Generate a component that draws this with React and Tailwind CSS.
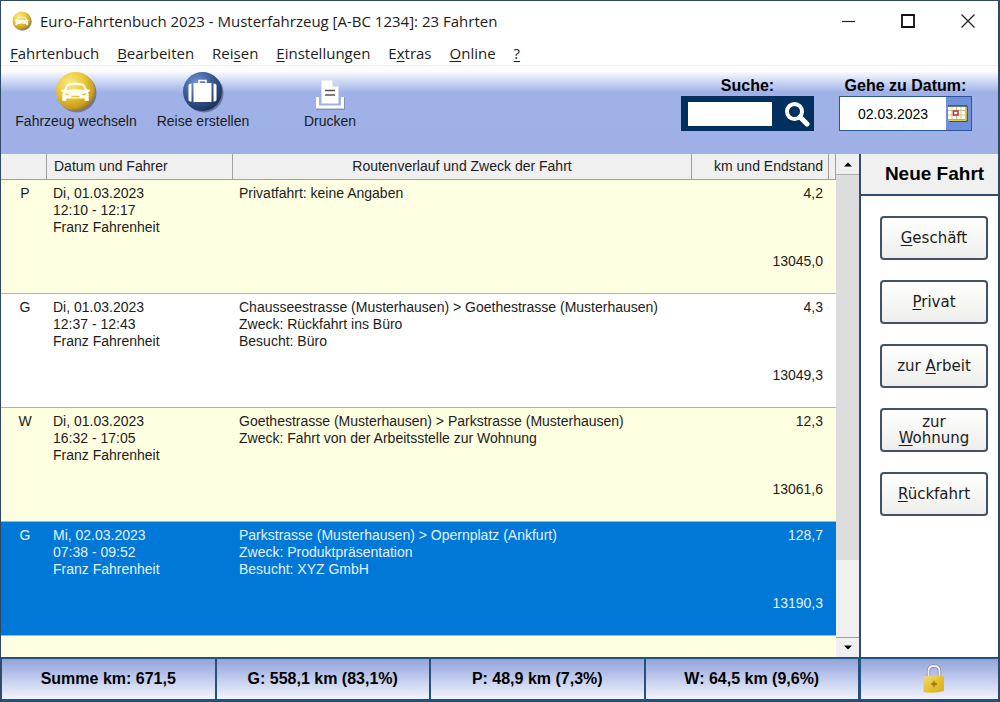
import { useState } from 'react';

const menuItems = [
  { pre: '', key: 'F', post: 'ahrtenbuch' },
  { pre: '', key: 'B', post: 'earbeiten' },
  { pre: 'Rei', key: 's', post: 'en' },
  { pre: '', key: 'E', post: 'instellungen' },
  { pre: 'E', key: 'x', post: 'tras' },
  { pre: '', key: 'O', post: 'nline' },
  { pre: '', key: '?', post: '' },
];

const trips = [
  {
    type: 'P',
    driver: ['Di, 01.03.2023', '12:10 - 12:17', 'Franz Fahrenheit'],
    route: ['Privatfahrt: keine Angaben'],
    km: '4,2',
    total: '13045,0',
  },
  {
    type: 'G',
    driver: ['Di, 01.03.2023', '12:37 - 12:43', 'Franz Fahrenheit'],
    route: [
      'Chausseestrasse (Musterhausen) > Goethestrasse (Musterhausen)',
      'Zweck: Rückfahrt ins Büro',
      'Besucht: Büro',
    ],
    km: '4,3',
    total: '13049,3',
  },
  {
    type: 'W',
    driver: ['Di, 01.03.2023', '16:32 - 17:05', 'Franz Fahrenheit'],
    route: [
      'Goethestrasse (Musterhausen) > Parkstrasse (Musterhausen)',
      'Zweck: Fahrt von der Arbeitsstelle zur Wohnung',
    ],
    km: '12,3',
    total: '13061,6',
  },
  {
    type: 'G',
    driver: ['Mi, 02.03.2023', '07:38 - 09:52', 'Franz Fahrenheit'],
    route: [
      'Parkstrasse (Musterhausen) > Opernplatz (Ankfurt)',
      'Zweck: Produktpräsentation',
      'Besucht: XYZ GmbH',
    ],
    km: '128,7',
    total: '13190,3',
  },
];

const newTripButtons = [
  { pre: '', key: 'G', post: 'eschäft' },
  { pre: '', key: 'P', post: 'rivat' },
  { pre: 'zur ', key: 'A', post: 'rbeit' },
  { pre: 'zur ', key: 'W', post: 'ohnung' },
  { pre: '', key: 'R', post: 'ückfahrt' },
];

const totals = ['Summe km: 671,5', 'G: 558,1 km (83,1%)', 'P: 48,9 km (7,3%)', 'W: 64,5 km (9,6%)'];

const Mnemonic = ({ pre, keyChar, post }) => (
  <span>
    {pre}
    <span className="underline underline-offset-2">{keyChar}</span>
    {post}
  </span>
);

const CarIcon = ({ className }) => (
  <svg viewBox="0 0 42 42" className={className} aria-hidden="true">
    <defs>
      <radialGradient id="gold" cx="0.36" cy="0.28" r="0.75">
        <stop offset="0" stopColor="#fbe98a" />
        <stop offset="0.45" stopColor="#eccb3c" />
        <stop offset="0.85" stopColor="#c99e1c" />
        <stop offset="1" stopColor="#8f7430" />
      </radialGradient>
    </defs>
    <circle cx="22" cy="22" r="19.500" fill="#5b628a" opacity="0.7" />
    <circle cx="20.500" cy="20.500" r="19.500" fill="url(#gold)" />
    <path
      fill="#fffdf2"
      fillRule="evenodd"
      d="M12 13q8.500-3.200 17 0l3 5.500 3 .3-.6 2-1.400.3.700 3v6h-4v-2.600H11.300v2.600h-4v-6l.7-3-1.400-.3-.6-2 3-.3zM13.500 14.800l-2 4.200q9-1.600 18 0l-2-4.200q-7-1.800-14 0zM9.500 22.200q1 2.300 4.300 2.300.6-1.700-4.300-2.300zM31.500 22.200q-1 2.300-4.300 2.300-.6-1.700 4.300-2.300zM16.500 24.800v1.400h8v-1.400z"
    />
  </svg>
);

const SuitcaseIcon = ({ className }) => (
  <svg viewBox="0 0 42 42" className={className} aria-hidden="true">
    <defs>
      <radialGradient id="navy" cx="0.35" cy="0.28" r="0.8">
        <stop offset="0" stopColor="#7394d2" />
        <stop offset="0.45" stopColor="#3f609c" />
        <stop offset="0.9" stopColor="#1d3562" />
        <stop offset="1" stopColor="#16264a" />
      </radialGradient>
    </defs>
    <circle cx="22" cy="22" r="19.500" fill="#4b547c" opacity="0.7" />
    <circle cx="20.500" cy="20.500" r="19.500" fill="url(#navy)" />
    <path d="M17 12V9.500h7V12" fill="none" stroke="#fff" strokeWidth="1.600" />
    <path d="M11.500 12h18v19h-18z" fill="#fff" />
    <path d="M9.500 12.500v18q-3 0-3-2v-14q0-2 3-2zM31.500 12.500v18q3 0 3-2v-14q0-2-3-2z" fill="#fff" />
  </svg>
);

const PrintIcon = ({ className }) => (
  <svg viewBox="0 0 42 42" className={className} aria-hidden="true">
    <path d="M8.500 26v11.500h26V26" fill="none" stroke="#8592be" strokeWidth="3" />
    <path d="M12.500 9.500h11l6 6v17h-17z" fill="#fff" />
    <path d="M23.500 9.500v6h6z" fill="#c5cfee" />
    <path d="M16 19.500h10M16 24h10" stroke="#555" strokeWidth="1.400" />
    <path d="M8.500 26v10h25V26" fill="none" stroke="#fff" strokeWidth="3" />
  </svg>
);

const CalendarIcon = () => (
  <svg viewBox="0 0 20 20" className="size-5" aria-hidden="true">
    <path d="M1 3h18v15H1z" fill="#a3924a" />
    <path d="M0 2h17v13H0z" fill="#fffdf0" />
    <path d="M0 15.500h17l2 2H1zM17 2h2v14h-2z" fill="#ded04e" />
    <path d="M0 2h19" stroke="#3c4a55" strokeWidth="1.500" />
    <path d="M19.300 2v15.500H1" fill="none" stroke="#4c5230" strokeWidth="1" />
    <path d="M4 3v12M8.500 3v12M13 3v12M0 6.500h17M0 11h17" stroke="#c7c795" strokeWidth="1" />
    <path d="M5.500 7h4.500v4H5.500z" fill="#fff" stroke="#c02c3c" strokeWidth="1.500" />
  </svg>
);

const LockIcon = () => (
  <svg viewBox="0 0 24 30" className="h-[30px] w-6" aria-hidden="true">
    <defs>
      <linearGradient id="brass" x1="0" y1="0" x2="1" y2="1">
        <stop offset="0" stopColor="#f3dc84" />
        <stop offset="0.5" stopColor="#e6c22f" />
        <stop offset="1" stopColor="#d9ae1b" />
      </linearGradient>
    </defs>
    <path d="M6.500 13V7q0-5 5.500-5t5.500 5v6" fill="none" stroke="#84869a" strokeWidth="3.400" />
    <path d="M6.500 13V7q0-5 5.500-5t5.500 5v6" fill="none" stroke="#eceef4" strokeWidth="1.900" />
    <path d="M1.500 12.500 22 11.500v15.500q-10 3-20.500 1z" fill="url(#brass)" />
    <path d="M12 16l2 4-2 4-2-4z" fill="#b08a1c" />
    <path d="M9 20h6" stroke="#8a6c18" strokeWidth="1.200" />
  </svg>
);

const tools = [
  { icon: CarIcon, label: 'Fahrzeug wechseln' },
  { icon: SuitcaseIcon, label: 'Reise erstellen' },
  { icon: PrintIcon, label: 'Drucken' },
];

const TitleBar = () => (
  <header className="flex h-10 items-center justify-between pr-[22px] pl-[11px]">
    <div className="flex items-center gap-2">
      <CarIcon className="size-5" />
      <h1 className="font-['Open_Sans',sans-serif] text-[15px]">
        Euro-Fahrtenbuch 2023 - Musterfahrzeug [A-BC 1234]: 23 Fahrten
      </h1>
    </div>
    <div className="flex items-center gap-11">
      <button type="button" aria-label="Minimieren">
        <svg viewBox="0 0 16 16" className="size-4"><path d="M2 8.500h13" stroke="#222" strokeWidth="1.200" /></svg>
      </button>
      <button type="button" aria-label="Maximieren">
        <svg viewBox="0 0 16 16" className="size-4"><path d="M2 2h12v12H2z" fill="none" stroke="#111" strokeWidth="1.800" /></svg>
      </button>
      <button type="button" aria-label="Schließen">
        <svg viewBox="0 0 16 16" className="size-4"><path d="M1.500 1.500l13 13M14.500 1.500l-13 13" stroke="#222" strokeWidth="1.300" /></svg>
      </button>
    </div>
  </header>
);

const Toolbar = ({ search, onSearch, date, onDate }) => (
  <div className="flex h-[88px] justify-between bg-linear-to-b from-white from-5% via-[#a0b1e8] via-30% to-[#9fb0e6] pr-[26px] pl-[13px]">
    <div className="flex gap-[3px] pt-[5px]">
      {tools.map(({ icon: Icon, label }) => (
        <button key={label} type="button" className="flex w-[124px] flex-col items-center self-start text-sm leading-4 whitespace-nowrap">
          <Icon className="size-[42px]" />
          {label}
        </button>
      ))}
    </div>
    <div className="flex gap-[25px] pt-[10px] text-black">
      <div className="flex w-[133px] flex-col">
        <label htmlFor="search" className="text-center text-base leading-5 font-bold">Suche:</label>
        <div className="flex h-[35px] items-center justify-between bg-[#01305f] pr-1 pl-[7px]">
          <input
            id="search"
            value={search}
            onChange={(e) => onSearch(e.target.value)}
            className="h-6 w-[84px] bg-white px-1 text-sm"
          />
          <button type="button" aria-label="Suchen">
            <svg viewBox="0 0 26 26" className="size-[26px]">
              <circle cx="10.500" cy="10.500" r="7.500" fill="none" stroke="#fff" strokeWidth="4" />
              <path d="M16 16l7 7" stroke="#fff" strokeWidth="5" strokeLinecap="round" />
            </svg>
          </button>
        </div>
      </div>
      <div className="flex w-[133px] flex-col">
        <label htmlFor="date" className="text-center text-base leading-5 font-bold whitespace-nowrap">Gehe zu Datum:</label>
        <div className="flex h-[35px] border border-[#2d5597] bg-[#6e90dc]">
          <input
            id="date"
            value={date}
            onChange={(e) => onDate(e.target.value)}
            className="w-[106px] bg-white text-center text-sm"
          />
          <button type="button" aria-label="Kalender" className="flex flex-1 items-center pl-0.5">
            <CalendarIcon />
          </button>
        </div>
      </div>
    </div>
  </div>
);

const TripTable = ({ selected, onSelect }) => (
  <table className="w-full table-fixed border-separate border-spacing-0 text-sm leading-[17px]">
    <colgroup>
      <col className="w-[46px]" />
      <col className="w-[186px]" />
      <col />
      <col className="w-[137px]" />
      <col className="w-[7px]" />
    </colgroup>
    <thead>
      <tr className="h-[26px] bg-[#f0f0f0] [&>th]:border-b [&>th]:border-[#a0a0a0] [&>th]:p-0 [&>th]:font-normal">
        <th className="border-r" aria-label="Art" />
        <th className="border-r text-left"><span className="pl-[7px]">Datum und Fahrer</span></th>
        <th className="border-r">Routenverlauf und Zweck der Fahrt</th>
        <th className="border-r text-right"><span className="pr-[5px]">km und Endstand</span></th>
        <th className="border-r" aria-hidden="true" />
      </tr>
    </thead>
    <tbody>
      {trips.map((trip, i) => {
        const active = i === selected;
        const color = active ? 'bg-[#0078d7] text-[#e3f1ff]' : i % 2 === 0 ? 'bg-[#ffffe1]' : 'bg-white';
        return (
          <tr
            key={trip.total}
            onClick={() => onSelect(i)}
            className={`h-[114px] align-top [&>td]:border-b [&>td]:border-[#b4b4a8] [&>td]:pt-[5px] ${color}`}
          >
            <td className="pl-0.5 text-center">{trip.type}</td>
            <td className="pl-[6px]">
              {trip.driver.map((line) => <div key={line}>{line}</div>)}
            </td>
            <td className="pl-[6px] whitespace-nowrap">
              {trip.route.map((line) => <div key={line}>{line}</div>)}
            </td>
            <td className="pr-[6px] text-right">
              <div>{trip.km}</div>
              <div className="mt-[51px]">{trip.total}</div>
            </td>
            <td />
          </tr>
        );
      })}
    </tbody>
  </table>
);

const ScrollBar = () => (
  <div className="flex w-[23px] flex-col bg-[#f0f0f0]">
    <button type="button" aria-label="Nach oben" className="flex h-[21px] items-center justify-center border-b border-[#b0b0b0]">
      <svg viewBox="0 0 8 5" className="h-[5px] w-2"><path d="M0 4.500 4 .5l4 4z" /></svg>
    </button>
    <div className="flex flex-1 flex-col">
      <div className="flex-[5] bg-[#dcdcdc]" />
      <div className="flex-1" />
    </div>
    <button type="button" aria-label="Nach unten" className="flex h-5 items-center justify-center border-t border-[#a0a0a0]">
      <svg viewBox="0 0 8 5" className="h-[5px] w-2"><path d="M0 .5 4 4.500l4-4z" /></svg>
    </button>
  </div>
);

const App = () => {
  const [selected, setSelected] = useState(3);
  const [search, setSearch] = useState('');
  const [date, setDate] = useState('02.03.2023');

  return (
    <div className="flex min-h-screen flex-col border border-r-2 border-[#2f4868] bg-white font-['Liberation_Sans',Arial,sans-serif] text-[#1c1c1c]">
      <TitleBar />

      <nav className="flex h-[25px] gap-[18px] border-b border-[#efefef] pl-[9px] font-['Open_Sans',sans-serif] text-[15px] leading-6">
        {menuItems.map((item) => (
          <button key={item.key} type="button">
            <Mnemonic pre={item.pre} keyChar={item.key} post={item.post} />
          </button>
        ))}
      </nav>

      <Toolbar search={search} onSearch={setSearch} date={date} onDate={setDate} />

      <div className="flex flex-1">
        <main className="flex flex-1">
          <div className="flex-1 bg-[#ffffe1]">
            <TripTable selected={selected} onSelect={setSelected} />
          </div>
          <ScrollBar />
        </main>

        {/* Neue Fahrt */}
        <aside className="w-[139px] border-l-2 border-[#2f4b70]">
          <h2 className="flex h-[42px] items-center justify-center border-b-2 border-[#2f4b70] bg-[#f0f0f0] pl-[10px] text-[19px] font-bold text-black">
            Neue Fahrt
          </h2>
          <div className="flex flex-col gap-5 pt-5 pr-[10px] pl-[19px]">
            {newTripButtons.map((item) => (
              <button
                key={item.key}
                type="button"
                className="flex h-11 items-center justify-center rounded border-2 border-[#43506a] bg-linear-to-b from-white to-[#eeeeea] px-3 text-center font-['DejaVu_Sans',Verdana,sans-serif] text-[15px] leading-4"
              >
                <Mnemonic pre={item.pre} keyChar={item.key} post={item.post} />
              </button>
            ))}
          </div>
        </aside>
      </div>

      {/* Statuszeile */}
      <footer className="flex h-11 border-y-2 border-[#24527f] bg-[#24527f]">
        <div className="flex flex-1 gap-0.5 border-l border-[#24527f]">
          {totals.map((text) => (
            <div
              key={text}
              className="flex flex-1 items-center justify-center bg-linear-to-b from-[#93a3dc] to-[#f3f5fd] text-base font-bold whitespace-nowrap text-black"
            >
              {text}
            </div>
          ))}
        </div>
        <div className="ml-[3px] flex w-[137px] items-center justify-center bg-linear-to-b from-[#93a3dc] to-[#f3f5fd] pl-2">
          <LockIcon />
        </div>
      </footer>
    </div>
  );
};

export default App;
